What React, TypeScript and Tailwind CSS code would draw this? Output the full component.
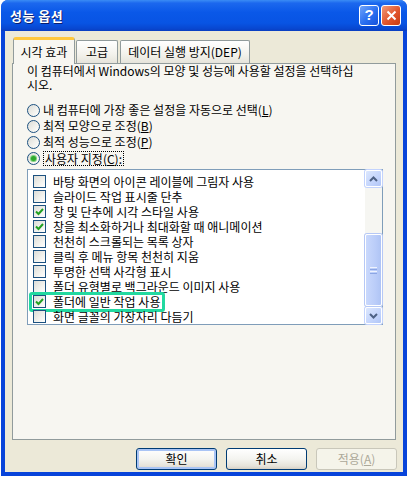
import React from 'react';

const KR = "font-['Noto_Sans_CJK_KR',sans-serif]";

type Row = { label: string; checked: boolean; marked?: boolean };

const rows: Row[] = [
  { label: '바탕 화면의 아이콘 레이블에 그림자 사용', checked: false },
  { label: '슬라이드 작업 표시줄 단추', checked: false },
  { label: '창 및 단추에 시각 스타일 사용', checked: true },
  { label: '창을 최소화하거나 최대화할 때 애니메이션', checked: true },
  { label: '천천히 스크롤되는 목록 상자', checked: false },
  { label: '클릭 후 메뉴 항목 천천히 지움', checked: false },
  { label: '투명한 선택 사각형 표시', checked: false },
  { label: '폴더 유형별로 백그라운드 이미지 사용', checked: false },
  { label: '폴더에 일반 작업 사용', checked: true, marked: true },
  { label: '화면 글꼴의 가장자리 다듬기', checked: false },
];

function CheckBox({ checked }: { checked: boolean }) {
  return (
    <span className="w-[13px] h-[13px] shrink-0 border border-[#1C5180] bg-[linear-gradient(135deg,#DCDCD7_0%,#F2F2EE_60%,#FFFFFF_100%)] flex items-center justify-center">
      {checked && (
        <svg width="11" height="11" viewBox="0 0 11 11">
          <polyline points="2,5.5 4.5,8 9,3" fill="none" stroke="#21A121" strokeWidth="2" />
        </svg>
      )}
    </span>
  );
}

function Radio({ on }: { on?: boolean }) {
  return (
    <span className="w-[13px] h-[13px] shrink-0 rounded-full border border-[#1C5180] bg-[linear-gradient(135deg,#DCDCD7_0%,#F2F2EE_60%,#FFFFFF_100%)] flex items-center justify-center">
      {on && <span className="w-[5px] h-[5px] rounded-full bg-[#2FA82F] shadow-[0_0_0_1px_#7ED27E]" />}
    </span>
  );
}

function ScrollBtn({ down }: { down?: boolean }) {
  return (
    <div className="h-[17px] w-[17px] shrink-0 rounded-[2px] border border-[#FFFFFF] bg-[linear-gradient(135deg,#DCE7FE_0%,#C3D4FC_60%,#B1C6F7_100%)] shadow-[0_0_0_1px_#C3D3FD] flex items-center justify-center">
      <svg width="9" height="6" viewBox="0 0 9 6">
        <polyline
          points={down ? '1,1 4.5,4.5 8,1' : '1,5 4.5,1.5 8,5'}
          fill="none"
          stroke="#4D6185"
          strokeWidth="2"
        />
      </svg>
    </div>
  );
}

function Btn({ children, primary, disabled }: { children: React.ReactNode; primary?: boolean; disabled?: boolean }) {
  const base = 'w-[81px] h-[22px] rounded-[3px] border flex items-center justify-center text-[12px] leading-[14px]';
  if (disabled)
    return <div className={`${base} border-[#C9C7BA] bg-[#F5F4EA] text-[#ACA899]`}>{children}</div>;
  return (
    <div
      className={`${base} border-[#003C74] text-black bg-[linear-gradient(to_bottom,#FFFFFF_0%,#F4F4F0_50%,#E6E3DA_85%,#D6D0C5_100%)] ${
        primary ? 'shadow-[inset_0_0_0_2px_#A9C4F5]' : ''
      }`}
    >
      {children}
    </div>
  );
}

export default function App() {
  return (
    <div className={`w-[410px] h-[480px] bg-white ${KR}`}>
      <div className="ml-[1px] w-[406px] h-[476px] flex flex-col rounded-t-[7px] overflow-hidden bg-[#0844DA]">
        {/* title bar */}
        <div className="h-[31px] shrink-0 flex items-center pl-[9px] pr-[6px] bg-[linear-gradient(180deg,#3A8CF5_0%,#1C68EE_10%,#0A58E8_40%,#0854E3_75%,#0847D0_92%,#0A3EC0_100%)]">
          <span className="text-white text-[13px] font-bold tracking-[0.5px] [text-shadow:1px_1px_0_#0A1E6E]">성능 옵션</span>
          <div className="ml-auto flex gap-[2px]">
            <div className="w-[20px] h-[21px] rounded-[3px] border border-white bg-[linear-gradient(135deg,#6FA3FA_0%,#2A6FF0_55%,#1551DB_100%)] flex items-center justify-center text-white text-[15px] font-bold font-['Liberation_Sans',sans-serif]">
              ?
            </div>
            <div className="w-[20px] h-[21px] rounded-[3px] border border-white bg-[linear-gradient(135deg,#F09A7A_0%,#E2552C_55%,#C63B12_100%)] flex items-center justify-center">
              <svg width="11" height="11" viewBox="0 0 11 11">
                <path d="M1.5 1.5 L9.5 9.5 M9.5 1.5 L1.5 9.5" stroke="white" strokeWidth="2" />
              </svg>
            </div>
          </div>
        </div>

        {/* body */}
        <div className="flex-1 mx-[4px] mb-[4px] bg-[#ECE9D8] flex flex-col pt-[6px]">
          {/* tabs */}
          <div className="h-[26px] flex items-end pl-[8px] text-[12px] leading-[14px] text-black">
            <div className="relative z-10 h-[27px] -mb-px w-[62px] border border-b-0 border-[#919B9C] bg-[#F7F6F1] rounded-t-[3px] flex items-center justify-center border-t-[3px] border-t-[#FFC83C]">
              시각 효과
            </div>
            <div className="h-[23px] w-[42px] ml-px border border-b-0 border-[#919B9C] rounded-t-[2px] bg-[linear-gradient(to_bottom,#FFFFFF_0%,#F3F2EC_60%,#E6E4DB_100%)] flex items-center justify-center">
              고급
            </div>
            <div className="h-[23px] w-[130px] ml-[2px] border border-b-0 border-[#919B9C] rounded-t-[2px] bg-[linear-gradient(to_bottom,#FFFFFF_0%,#F3F2EC_60%,#E6E4DB_100%)] flex items-center justify-center">
              데이터 실행 방지(DEP)
            </div>
          </div>

          {/* panel */}
          <div className="mx-[7px] h-[377px] shrink-0 border border-[#919B9C] bg-[#F7F6F1] pl-[14px] pr-[12px] text-[12px] leading-[14px] text-black">
            <div className="h-[14px] whitespace-nowrap">이 컴퓨터에서 Windows의 모양 및 성능에 사용할 설정을 선택하십</div>
            <div className="h-[14px]">시오.</div>

            <div className="mt-[10px] flex flex-col">
              <div className="h-4 flex items-center gap-[3px]">
                <Radio />
                <span>내 컴퓨터에 가장 좋은 설정을 자동으로 선택(<u>L</u>)</span>
              </div>
              <div className="h-4 flex items-center gap-[3px]">
                <Radio />
                <span>최적 모양으로 조정(<u>B</u>)</span>
              </div>
              <div className="h-4 flex items-center gap-[3px]">
                <Radio />
                <span>최적 성능으로 조정(<u>P</u>)</span>
              </div>
              <div className="h-4 flex items-center gap-[3px]">
                <Radio on />
                <span className="border border-dotted border-black leading-[13px] px-px">
                  사용자 지정(<u>C</u>):
                </span>
              </div>
            </div>

            {/* list box */}
            <div className="mt-[3px] w-[356px] h-[156px] border border-[#7F9DB9] bg-white flex">
              <div className="flex-1 pt-[4px] pl-[5px] overflow-hidden">
                {rows.map((r) => (
                  <div key={r.label} className="h-[15px] flex items-center">
                    <div className="relative flex items-center gap-[7px]">
                      <CheckBox checked={r.checked} />
                      <span className="whitespace-nowrap leading-[14px]">{r.label}</span>
                      {r.marked && (
                        <span className="absolute -left-[4px] -right-[5px] -top-[3px] -bottom-[3px] border-[3px] border-[#22D9A0] rounded-[3px]" />
                      )}
                    </div>
                  </div>
                ))}
              </div>
              {/* scrollbar */}
              <div className="w-[17px] flex flex-col bg-[#F6F6F2]">
                <ScrollBtn />
                <div className="flex-1 relative">
                  <div className="absolute left-0 right-0 top-[47px] h-[72px] rounded-[2px] border border-white bg-[linear-gradient(90deg,#C9D8FC_0%,#BBCDF9_60%,#AFC4F5_100%)] shadow-[0_0_0_1px_#B6C8F6] flex flex-col items-center justify-center gap-[1px]">
                    <span className="w-[7px] h-px bg-[#EEF3FE]" />
                    <span className="w-[7px] h-px bg-[#8CA6E4]" />
                    <span className="w-[7px] h-px bg-[#EEF3FE]" />
                    <span className="w-[7px] h-px bg-[#8CA6E4]" />
                  </div>
                </div>
                <ScrollBtn down />
              </div>
            </div>
          </div>

          {/* buttons */}
          <div className="mt-[8px] flex justify-end gap-[9px] pr-[6px]">
            <Btn primary>확인</Btn>
            <Btn>취소</Btn>
            <Btn disabled>
              <span>
                적용(<u>A</u>)
              </span>
            </Btn>
          </div>
        </div>
      </div>
    </div>
  );
}
